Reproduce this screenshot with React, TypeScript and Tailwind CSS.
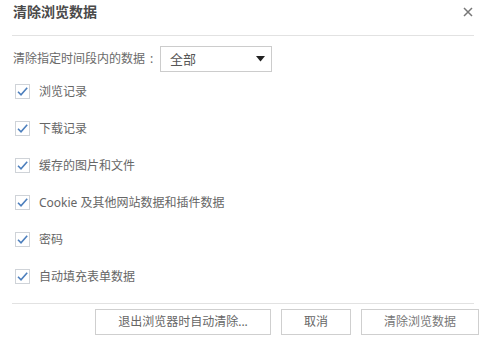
const items = [
  "浏览记录",
  "下载记录",
  "缓存的图片和文件",
  "Cookie 及其他网站数据和插件数据",
  "密码",
  "自动填充表单数据",
];

function CheckBox() {
  return (
    <span className="flex h-[15px] w-[15px] items-center justify-center border border-[#cfd3d8] bg-white">
      <svg width="13" height="13" viewBox="0 0 13 13" fill="none">
        <path d="M2 6.8 L5 9.8 L11.2 2.8" stroke="#4d7fbd" strokeWidth="1.6" />
      </svg>
    </span>
  );
}

export default function App() {
  return (
    <div
      className="h-[338px] w-[482px] overflow-hidden bg-white text-[#666]"
      style={{ fontFamily: '"Noto Sans", "Noto Sans CJK SC", sans-serif' }}
    >
      <div className="ml-3 mr-2 flex h-[36px] items-start justify-between border-b border-[#e2e2e2]">
        <h1 className="ml-[1px] pt-[3px] text-[14px] font-bold leading-[18px] text-[#4a4a4a]">清除浏览数据</h1>
        <svg className="mr-[1px] mt-[7px]" width="10" height="10" viewBox="0 0 10 10">
          <path d="M1 1 L9 9 M9 1 L1 9" stroke="#777" strokeWidth="1.5" />
        </svg>
      </div>

      <div className="mt-[10px] flex items-center pl-[13px]">
        <span className="flex w-[147px] text-[12px] leading-[26px] text-[#6a6a6a]">
          清除指定时间段内的数据<span className="ml-[5px]">:</span>
        </span>
        <div className="flex h-[26px] w-[112px] items-center justify-between border border-[#cccccc] pl-[9px] pr-[6px]">
          <span className="text-[13px] leading-[24px] text-[#555]">全部</span>
          <svg width="9" height="6" viewBox="0 0 9 6">
            <path d="M0 0 H9 L4.5 5.5 Z" fill="#222" />
          </svg>
        </div>
      </div>

      <div className="mt-[1px] flex flex-col pl-[15px]">
        {items.map((label) => (
          <label key={label} className="flex h-[37px] items-center gap-[9px]">
            <CheckBox />
            <span className="text-[12px] leading-[16px] text-[#666]">{label}</span>
          </label>
        ))}
      </div>

      <div className="ml-3 mr-2 mt-[8px] border-t border-[#e2e2e2]" />

      <div className="mt-[5px] flex justify-end gap-[10px] pr-[3px]">
        <button className="h-[26px] w-[176px] border border-[#cfcfcf] bg-white text-[12px] text-[#666]">
          退出浏览器时自动清除...
        </button>
        <button className="h-[26px] w-[70px] border border-[#cfcfcf] bg-white text-[12px] text-[#666]">
          取消
        </button>
        <button className="h-[26px] w-[118px] border border-[#cfcfcf] bg-white text-[12px] text-[#777]">
          清除浏览数据
        </button>
      </div>
    </div>
  );
}
